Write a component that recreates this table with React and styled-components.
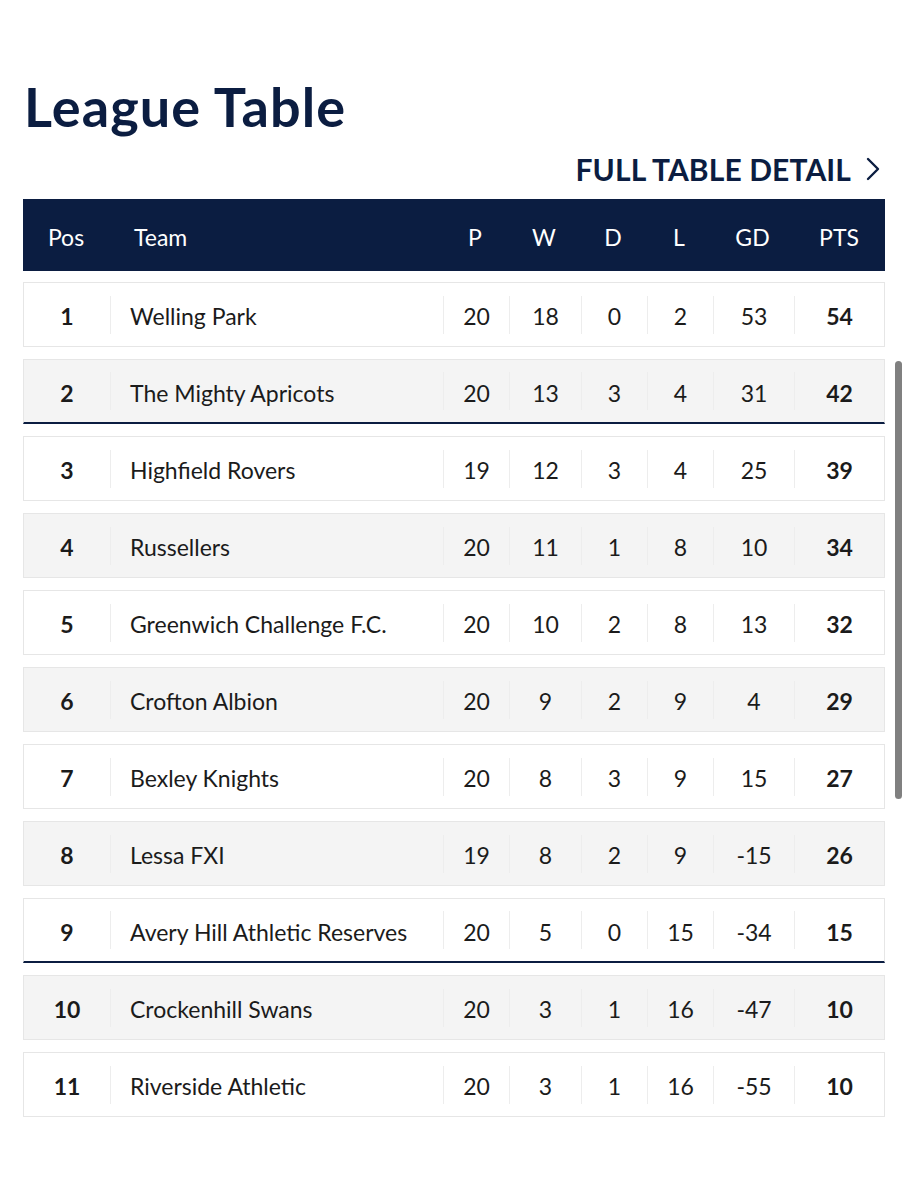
import React from "react";
import styled, { createGlobalStyle } from "styled-components";

const Global = createGlobalStyle`
  html, body { margin: 0; padding: 0; background: #ffffff; }
  body { font-family: Lato, "Open Sans", sans-serif; color: #1b1b1b; }
`;

const NAVY = "#0b1d41";

const Page = styled.main`
  padding: 75px 24px 80px 23px;
`;

const Title = styled.h1`
  margin: 0 0 0 1px;
  font-size: 54px;
  line-height: 64px;
  font-weight: 700;
  letter-spacing: 1.1px;
  color: ${NAVY};
`;

const LinkRow = styled.div`
  display: flex;
  justify-content: flex-end;
  margin-top: 12px;
  padding-right: 5px;
`;

const DetailLink = styled.a`
  display: flex;
  align-items: center;
  gap: 15px;
  font-size: 30px;
  line-height: 36px;
  font-weight: 700;
  color: ${NAVY};
  text-decoration: none;
  letter-spacing: 0.1px;
`;

const Table = styled.section`
  margin-top: 12px;
  display: flex;
  flex-direction: column;
  gap: 11px;
`;

const cols = "86px 333px 66px 72px 66px 66px 81px 1fr";

const HeaderBar = styled.div`
  display: grid;
  grid-template-columns: ${cols};
  align-items: center;
  height: 72px;
  padding-top: 3px;
  box-sizing: border-box;
  background: ${NAVY};
  color: #ffffff;
  font-size: 23px;
`;

const HeadCell = styled.div`
  text-align: ${(p) => (p.$left ? "left" : "center")};
  padding-left: ${(p) => (p.$left ? "25px" : "0")};
`;

const Rows = styled.div`
  display: flex;
  flex-direction: column;
  gap: 12px;
`;

const Row = styled.div`
  box-sizing: border-box;
  display: grid;
  grid-template-columns: ${cols};
  align-items: center;
  height: 65px;
  background: ${(p) => (p.$alt ? "#f4f4f4" : "#ffffff")};
  border: 1px solid #e6e6e6;
  border-bottom: ${(p) => (p.$zone ? `2px solid ${NAVY}` : "1px solid #e6e6e6")};
  font-size: 23px;
`;

const Cell = styled.div`
  box-sizing: border-box;
  display: flex;
  align-items: center;
  justify-content: ${(p) => (p.$left ? "flex-start" : "center")};
  height: 38px;
  padding-top: 3px;
  padding-left: ${(p) => (p.$left ? "19px" : "0")};
  border-left: ${(p) => (p.$first ? "none" : "1px solid #ededed")};
  font-weight: ${(p) => (p.$bold ? 700 : 400)};
  color: #1b1b1b;
`;

const Scrollbar = styled.div`
  position: fixed;
  top: 361px;
  right: 7px;
  width: 7px;
  height: 438px;
  border-radius: 4px;
  background: #808080;
`;

const data = [
  [1, "Welling Park", 20, 18, 0, 2, 53, 54],
  [2, "The Mighty Apricots", 20, 13, 3, 4, 31, 42],
  [3, "Highfield Rovers", 19, 12, 3, 4, 25, 39],
  [4, "Russellers", 20, 11, 1, 8, 10, 34],
  [5, "Greenwich Challenge F.C.", 20, 10, 2, 8, 13, 32],
  [6, "Crofton Albion", 20, 9, 2, 9, 4, 29],
  [7, "Bexley Knights", 20, 8, 3, 9, 15, 27],
  [8, "Lessa FXI", 19, 8, 2, 9, -15, 26],
  [9, "Avery Hill Athletic Reserves", 20, 5, 0, 15, -34, 15],
  [10, "Crockenhill Swans", 20, 3, 1, 16, -47, 10],
  [11, "Riverside Athletic", 20, 3, 1, 16, -55, 10],
];

const zones = new Set([2, 9]);

function Chevron() {
  return (
    <svg width="14" height="24" viewBox="0 0 14 24" fill="none">
      <path d="M2 2 L12 12 L2 22" stroke={NAVY} strokeWidth="2.4" strokeLinecap="round" strokeLinejoin="round" />
    </svg>
  );
}

export default function App() {
  return (
    <>
      <Global />
      <Page>
        <Title>League Table</Title>
        <LinkRow>
          <DetailLink href="#">
            FULL TABLE DETAIL
            <Chevron />
          </DetailLink>
        </LinkRow>
        <Table>
          <HeaderBar>
            <HeadCell>Pos</HeadCell>
            <HeadCell $left>Team</HeadCell>
            <HeadCell>P</HeadCell>
            <HeadCell>W</HeadCell>
            <HeadCell>D</HeadCell>
            <HeadCell>L</HeadCell>
            <HeadCell>GD</HeadCell>
            <HeadCell>PTS</HeadCell>
          </HeaderBar>
          <Rows>
            {data.map(([pos, team, p, w, d, l, gd, pts]) => (
              <Row key={pos} $alt={pos % 2 === 0} $zone={zones.has(pos)}>
                <Cell $first $bold>{pos}</Cell>
                <Cell $left>{team}</Cell>
                <Cell>{p}</Cell>
                <Cell>{w}</Cell>
                <Cell>{d}</Cell>
                <Cell>{l}</Cell>
                <Cell>{gd}</Cell>
                <Cell $bold>{pts}</Cell>
              </Row>
            ))}
          </Rows>
        </Table>
      </Page>
      <Scrollbar />
    </>
  );
}
